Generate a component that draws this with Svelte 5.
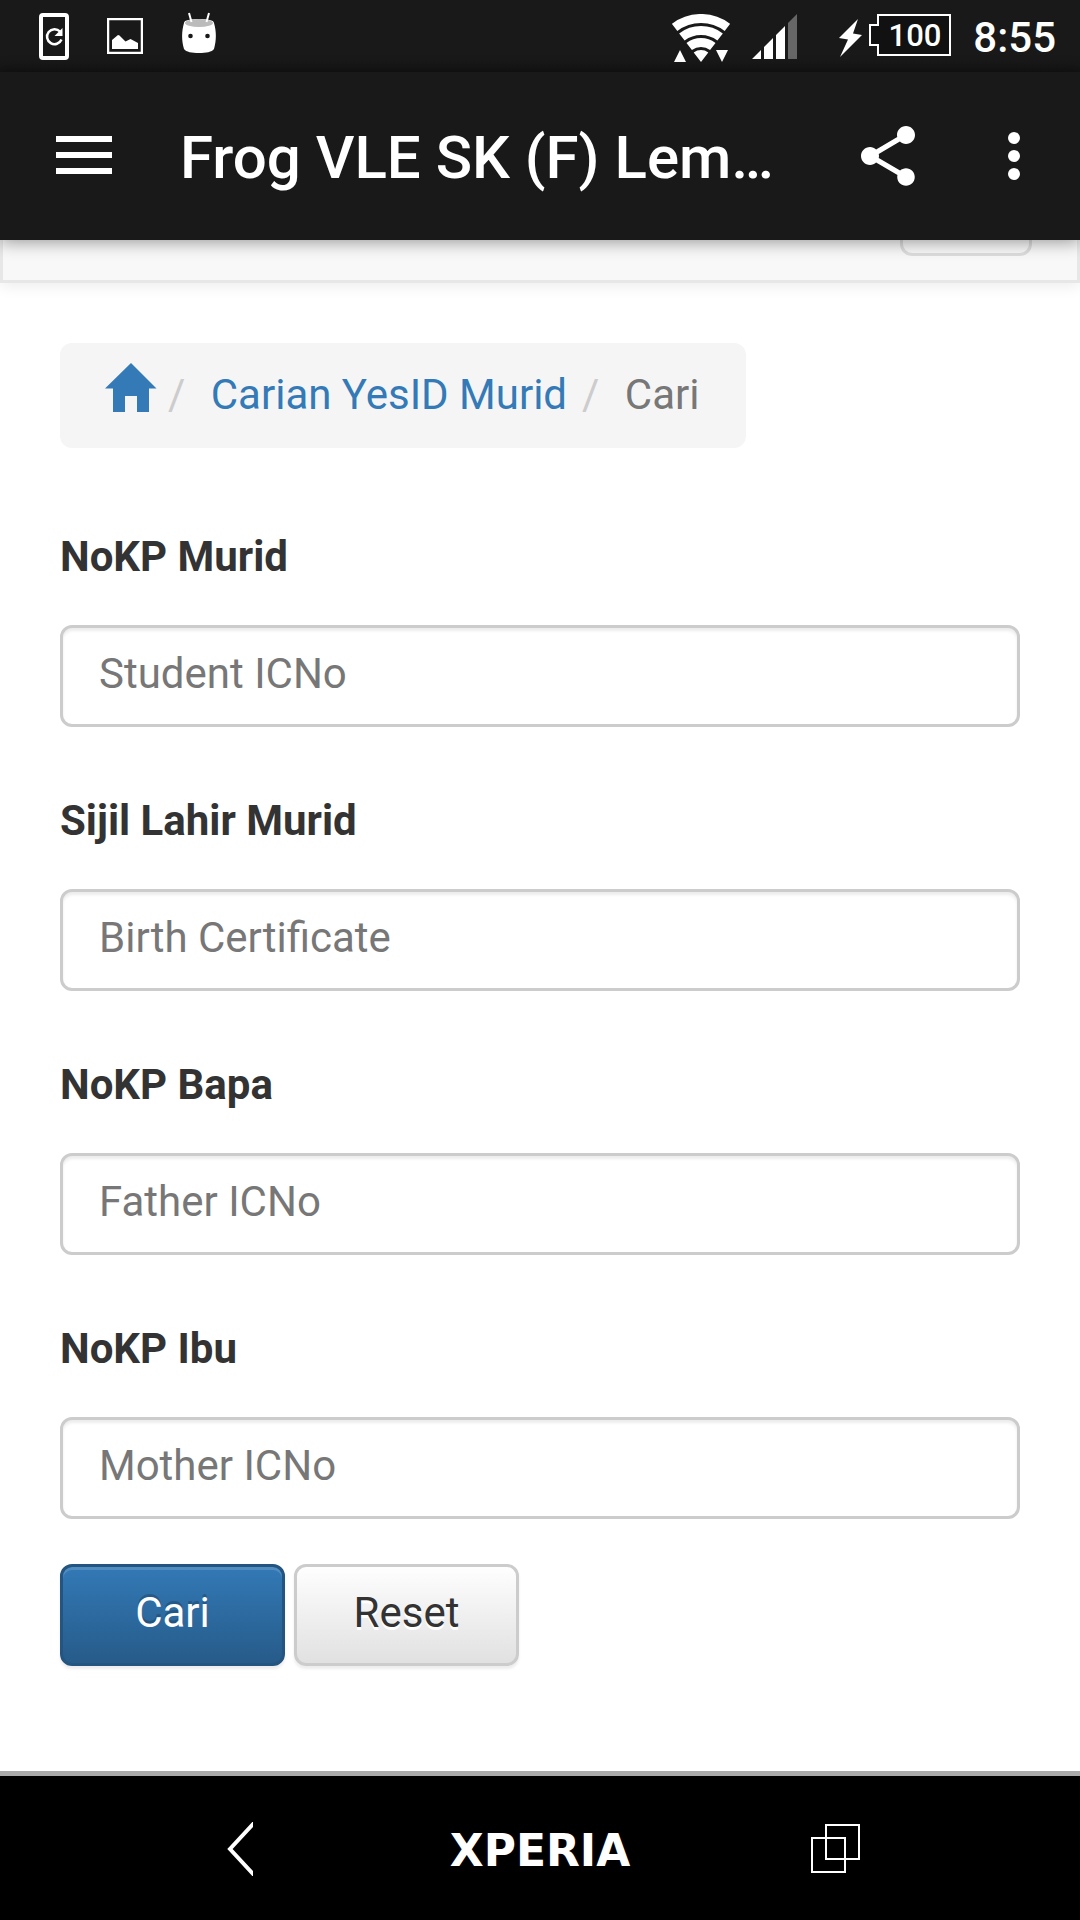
<script>
	const title = 'Frog VLE SK (F) Lem…';

	const fields = [
		{ id: 'nokp-murid', label: 'NoKP Murid', placeholder: 'Student ICNo' },
		{ id: 'sijil-lahir', label: 'Sijil Lahir Murid', placeholder: 'Birth Certificate' },
		{ id: 'nokp-bapa', label: 'NoKP Bapa', placeholder: 'Father ICNo' },
		{ id: 'nokp-ibu', label: 'NoKP Ibu', placeholder: 'Mother ICNo' }
	];

	let values = $state({});

	function search(e) {
		e.preventDefault();
	}

	function reset() {
		values = {};
	}
</script>

<div class="screen">
	<div class="status-bar">
		<div class="notifications">
			<svg width="30" height="48" viewBox="0 0 30 48" fill="none" stroke="#fff">
				<rect x="2" y="3" width="26" height="43" rx="2" stroke-width="4" />
				<path d="M21 19.500a7.500 7.500 0 1 0 1.500 8" stroke-width="2.500" />
				<path d="M23.500 16v8h-8z" fill="#fff" stroke="none" />
			</svg>
			<svg width="36" height="36" viewBox="0 0 36 36">
				<rect x="1" y="1" width="34" height="34" fill="none" stroke="#fff" stroke-width="2.500" />
				<path d="M5 31v-9l6-5 1.500.5 6 6 5-2.500 7.500 4v6z" fill="#fff" />
			</svg>
			<svg width="36" height="48" viewBox="0 0 36 48">
				<path d="M3 11c0-3 7-4 15-4s15 1 15 4c2.500 9 2.500 17 0 26-2 3-8 4-15 4s-13-1-15-4c-2.500-9-2.500-17 0-26z" fill="#fff" />
				<ellipse cx="18" cy="11" rx="14" ry="4" fill="#bbb" />
				<path d="M8 1l2.500 9M28 1l-2.500 9" stroke="#fff" stroke-width="2" />
				<circle cx="9.500" cy="24" r="2.300" fill="#191919" />
				<circle cx="26.500" cy="24" r="2.300" fill="#191919" />
			</svg>
		</div>
		<div class="system">
			<svg width="58" height="48" viewBox="0 0 58 48">
				<g fill="none" stroke="#fff" stroke-width="9">
					<path d="M2.600 13.400a43.500 43.500 0 0 1 52.800 0" />
					<path d="M9.900 23a31.500 31.500 0 0 1 38.200 0" />
					<path d="M17.200 32.500a19.500 19.500 0 0 1 23.600 0" />
				</g>
				<path d="M29 48l-7.300-9.500a12 12 0 0 1 14.600 0zM2 48h12l-6-12zM44 36h12l-6 12z" fill="#fff" />
			</svg>
			<svg width="45" height="48" viewBox="0 0 45 48" fill="#fff">
				<path d="M0 45h9v-9zM12 45h9V24l-9 9zM24 45h9V12l-9 9z" />
				<path d="M36 45h9V0l-9 9z" fill="#666" />
			</svg>
			<div class="battery">
				<svg width="23" height="38" viewBox="0 0 23 38" fill="#fff">
					<path d="M19 0L0 19l9 1.500L1 38l22-22-9-1.500z" />
				</svg>
				<svg width="82" height="48" viewBox="0 0 82 48">
					<path d="M9 1h72v40H9V31H1V11h8z" fill="#111" stroke="#fff" stroke-width="2" />
					<text x="46" y="32" text-anchor="middle">100</text>
				</svg>
			</div>
			<span class="clock">8:55</span>
		</div>
	</div>

	<header class="app-bar">
		<button class="icon-button menu" aria-label="Menu">
			<svg width="56" height="40" viewBox="0 0 56 40" fill="#fff">
				<path d="M0 0h56v6H0zM0 16h56v6H0zM0 32h56v6H0z" />
			</svg>
		</button>
		<h1>{title}</h1>
		<button class="icon-button" aria-label="Share">
			<svg width="72" height="72" viewBox="0 0 24 24" fill="#fff">
				<path d="M18 16.080c-.76 0-1.440.3-1.960.77L8.910 12.700c.05-.23.09-.46.09-.7s-.04-.47-.09-.7l7.050-4.110c.54.5 1.250.81 2.040.81 1.660 0 3-1.340 3-3s-1.340-3-3-3-3 1.340-3 3c0 .24.04.47.09.7L8.040 9.810C7.500 9.310 6.790 9 6 9c-1.660 0-3 1.340-3 3s1.340 3 3 3c.79 0 1.500-.31 2.040-.81l7.120 4.160c-.05.21-.08.43-.08.65 0 1.610 1.310 2.920 2.920 2.920s2.920-1.310 2.920-2.920-1.310-2.920-2.920-2.920z" />
			</svg>
		</button>
		<button class="icon-button" aria-label="More options">
			<svg width="72" height="72" viewBox="0 0 24 24" fill="#fff">
				<circle cx="12" cy="6" r="2" />
				<circle cx="12" cy="12" r="2" />
				<circle cx="12" cy="18" r="2" />
			</svg>
		</button>
	</header>

	<!-- scrolled under the app bar, only its lower edge shows -->
	<div class="navbar">
		<button class="toggle" aria-label="Toggle navigation"></button>
	</div>

	<main>
		<ol class="breadcrumb">
			<li>
				<a href="#home" aria-label="Home">
					<svg class="home" width="48" height="49" viewBox="0 0 48 49" fill="#337ab7">
						<path d="M26 0l25.500 25.500H44V49H32V33H20v16H8V25.500H0z" />
					</svg>
				</a>
			</li>
			<li><a href="#carian">Carian YesID Murid</a></li>
			<li class="active">Cari</li>
		</ol>

		<form onsubmit={search}>
			{#each fields as field}
				<div class="form-group">
					<label for={field.id}>{field.label}</label>
					<input type="text" id={field.id} placeholder={field.placeholder} bind:value={values[field.id]} />
				</div>
			{/each}
			<div class="actions">
				<button type="submit" class="btn primary">Cari</button>
				<button type="button" class="btn default" onclick={reset}>Reset</button>
			</div>
		</form>
	</main>

	<nav class="system-nav">
		<button class="icon-button" aria-label="Back">
			<svg width="26" height="54" viewBox="0 0 26 54" fill="none" stroke="#fff" stroke-width="4">
				<path d="M28 0L3 27l25 27" />
			</svg>
		</button>
		<span class="wordmark">XPERIA</span>
		<button class="icon-button" aria-label="Recent apps">
			<svg width="58" height="50" viewBox="0 0 58 50" fill="none" stroke="#fff" stroke-width="2">
				<rect x="15" y="1" width="33" height="34" />
				<rect x="1" y="14" width="33" height="34" />
			</svg>
		</button>
	</nav>
</div>

<style>
	:global(body) {
		background: #fff;
	}

	.screen {
		display: flex;
		flex-direction: column;
		min-height: 100vh;
		font-family: Roboto, 'Liberation Sans', sans-serif;
		font-size: 42px;
		line-height: 60px;
		color: #333;
	}

	svg {
		display: block;
		flex: none;
	}

	button {
		font: inherit;
		cursor: pointer;
	}

	.status-bar {
		display: flex;
		align-items: center;
		justify-content: space-between;
		box-sizing: border-box;
		height: 72px;
		padding: 0 24px 0 39px;
		background: linear-gradient(#191919 60px, #141414);
		color: #fff;
	}

	.notifications,
	.system {
		display: flex;
		align-items: center;
	}

	.notifications {
		gap: 38px;
	}

	.system {
		gap: 22px;
		padding-top: 4px;
	}

	.battery {
		display: flex;
		align-items: center;
		gap: 7px;
		margin-left: 20px;
	}

	.battery text {
		fill: #fff;
		font-size: 31px;
		font-weight: 500;
	}

	.clock {
		font-weight: 500;
	}

	.app-bar {
		display: flex;
		align-items: center;
		box-sizing: border-box;
		height: 168px;
		padding: 0 30px 0 56px;
		background: #191919;
		color: #fff;
		box-shadow: 0 2px 16px rgba(0, 0, 0, 0.4);
		position: relative;
		z-index: 1;
	}

	.icon-button {
		display: flex;
		align-items: center;
		justify-content: center;
		border: none;
		padding: 0;
		background: none;
	}

	.menu {
		margin-right: 68px;
	}

	.app-bar h1 {
		flex: 1;
		margin: 0;
		padding-top: 4px;
		font-size: 60px;
		font-weight: 500;
		line-height: 72px;
		white-space: nowrap;
	}

	.app-bar h1 + .icon-button {
		margin-right: 54px;
	}

	.navbar {
		display: flex;
		align-items: flex-end;
		justify-content: flex-end;
		box-sizing: border-box;
		height: 43px;
		padding: 0 45px 24px;
		overflow: clip;
		background: #f8f8f8;
		border: 3px solid #e7e7e7;
		border-top: none;
		box-shadow: 0 3px 15px rgba(0, 0, 0, 0.08);
	}

	.toggle {
		flex: none;
		width: 132px;
		height: 102px;
		background: transparent;
		border: 3px solid #ddd;
		border-radius: 12px;
	}

	main {
		flex: 1;
		padding: 60px;
	}

	.breadcrumb {
		display: flex;
		align-items: center;
		box-sizing: border-box;
		width: fit-content;
		height: 105px;
		margin: 0 0 79px;
		padding: 0 47px 2px 45px;
		list-style: none;
		background: #f5f5f5;
		border-radius: 12px;
	}

	.breadcrumb li {
		display: flex;
		align-items: center;
	}

	.breadcrumb li + li::before {
		content: '/\00a0';
		padding: 0 15px;
		color: #ccc;
	}

	.breadcrumb a {
		color: #337ab7;
		text-decoration: none;
	}

	.home {
		overflow: visible;
		margin-bottom: 15px;
	}

	.active {
		color: #777;
	}

	.form-group {
		display: flex;
		flex-direction: column;
		gap: 38px;
		margin-bottom: 64px;
	}

	.form-group:nth-last-child(2) {
		margin-bottom: 45px;
	}

	label {
		font-weight: 700;
	}

	input {
		box-sizing: border-box;
		width: 100%;
		height: 102px;
		padding: 15px 36px 21px;
		font: inherit;
		color: #555;
		background: #fff;
		border: 3px solid #ccc;
		border-radius: 12px;
		box-shadow: inset 0 3px 3px rgba(0, 0, 0, 0.075);
	}

	input::placeholder {
		color: #777;
	}

	input:focus {
		outline: none;
		border-color: #66afe9;
	}

	.actions {
		display: flex;
		gap: 9px;
	}

	.btn {
		box-sizing: border-box;
		width: 225px;
		height: 102px;
		padding: 16px 36px 20px;
		border: 3px solid #ccc;
		border-radius: 12px;
	}

	.primary {
		color: #fff;
		background: linear-gradient(#337ab7, #265a88) border-box;
		border-color: #245580;
		text-shadow: 0 -3px 0 rgba(0, 0, 0, 0.2);
		box-shadow: inset 0 3px 0 rgba(255, 255, 255, 0.15), 0 3px 3px rgba(0, 0, 0, 0.075);
	}

	.default {
		color: #333;
		background: linear-gradient(#fff, #e0e0e0) border-box;
		text-shadow: 0 3px 0 #fff;
		box-shadow: 0 3px 3px rgba(0, 0, 0, 0.075);
	}

	.system-nav {
		display: grid;
		grid-template-columns: repeat(3, 1fr);
		align-items: center;
		height: 142px;
		padding: 2px 90px 0;
		background: #000;
		border-top: 5px solid #aaa;
	}

	.wordmark {
		padding-top: 4px;
		font-family: 'DejaVu Sans', sans-serif;
		font-size: 44px;
		font-weight: 700;
		text-align: center;
		color: #fff;
	}
</style>
